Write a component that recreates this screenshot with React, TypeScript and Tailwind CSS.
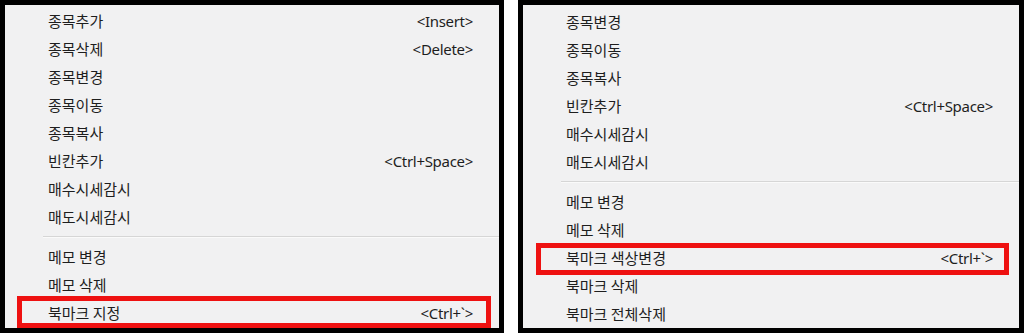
import React from "react";

type Item = { label?: string; shortcut?: string; highlight?: boolean; sep?: boolean };

const leftItems: Item[] = [
  { label: "종목추가", shortcut: "<Insert>" },
  { label: "종목삭제", shortcut: "<Delete>" },
  { label: "종목변경" },
  { label: "종목이동" },
  { label: "종목복사" },
  { label: "빈칸추가", shortcut: "<Ctrl+Space>" },
  { label: "매수시세감시" },
  { label: "매도시세감시" },
  { sep: true },
  { label: "메모 변경" },
  { label: "메모 삭제" },
  { label: "북마크 지정", shortcut: "<Ctrl+`>", highlight: true },
];

const rightItems: Item[] = [
  { label: "종목변경" },
  { label: "종목이동" },
  { label: "종목복사" },
  { label: "빈칸추가", shortcut: "<Ctrl+Space>" },
  { label: "매수시세감시" },
  { label: "매도시세감시" },
  { sep: true },
  { label: "메모 변경" },
  { label: "메모 삭제" },
  { label: "북마크 색상변경", shortcut: "<Ctrl+`>", highlight: true },
  { label: "북마크 삭제" },
  { label: "북마크 전체삭제" },
];

const MenuRow = ({ item, boxClass }: { item: Item; boxClass: string }) => {
  if (item.sep) {
    return (
      <div className="h-3 flex items-center pl-[38px]">
        <div className="w-full border-t border-[#d6d6d6] border-b-[1px] border-b-[#fafafa]" />
      </div>
    );
  }
  return (
    <div className="relative h-7 flex items-center justify-between pl-[43px] pr-[26px]">
      <span>{item.label}</span>
      {item.shortcut && (
        <span className="font-['Noto_Sans','Segoe_UI',sans-serif] text-[15px] tracking-[-0.3px]">{item.shortcut}</span>
      )}
      {item.highlight && (
        <span className={"absolute border-[5px] border-[#ee1111] pointer-events-none " + boxClass} />
      )}
    </div>
  );
};

const Menu = ({ items, className, boxClass }: { items: Item[]; className: string; boxClass: string }) => (
  <div className={"h-[333px] border-[5px] border-black bg-[#f1f1f2] " + className}>
    {items.map((item, i) => (
      <MenuRow key={i} item={item} boxClass={boxClass} />
    ))}
  </div>
);

export default function App() {
  return (
    <div className="w-[1024px] h-[335px] bg-white flex justify-between font-['Noto_Sans_CJK_KR',sans-serif] text-[15px] text-[#1e1e1e]">
      <Menu items={leftItems} className="w-[504px] pt-[2px]" boxClass="left-[12px] right-[8px] -top-[3px] -bottom-[1px]" />
      <Menu items={rightItems} className="w-[506px] pt-[3px]" boxClass="left-[13px] right-[10px] -top-[1px] -bottom-[3px]" />
    </div>
  );
}
